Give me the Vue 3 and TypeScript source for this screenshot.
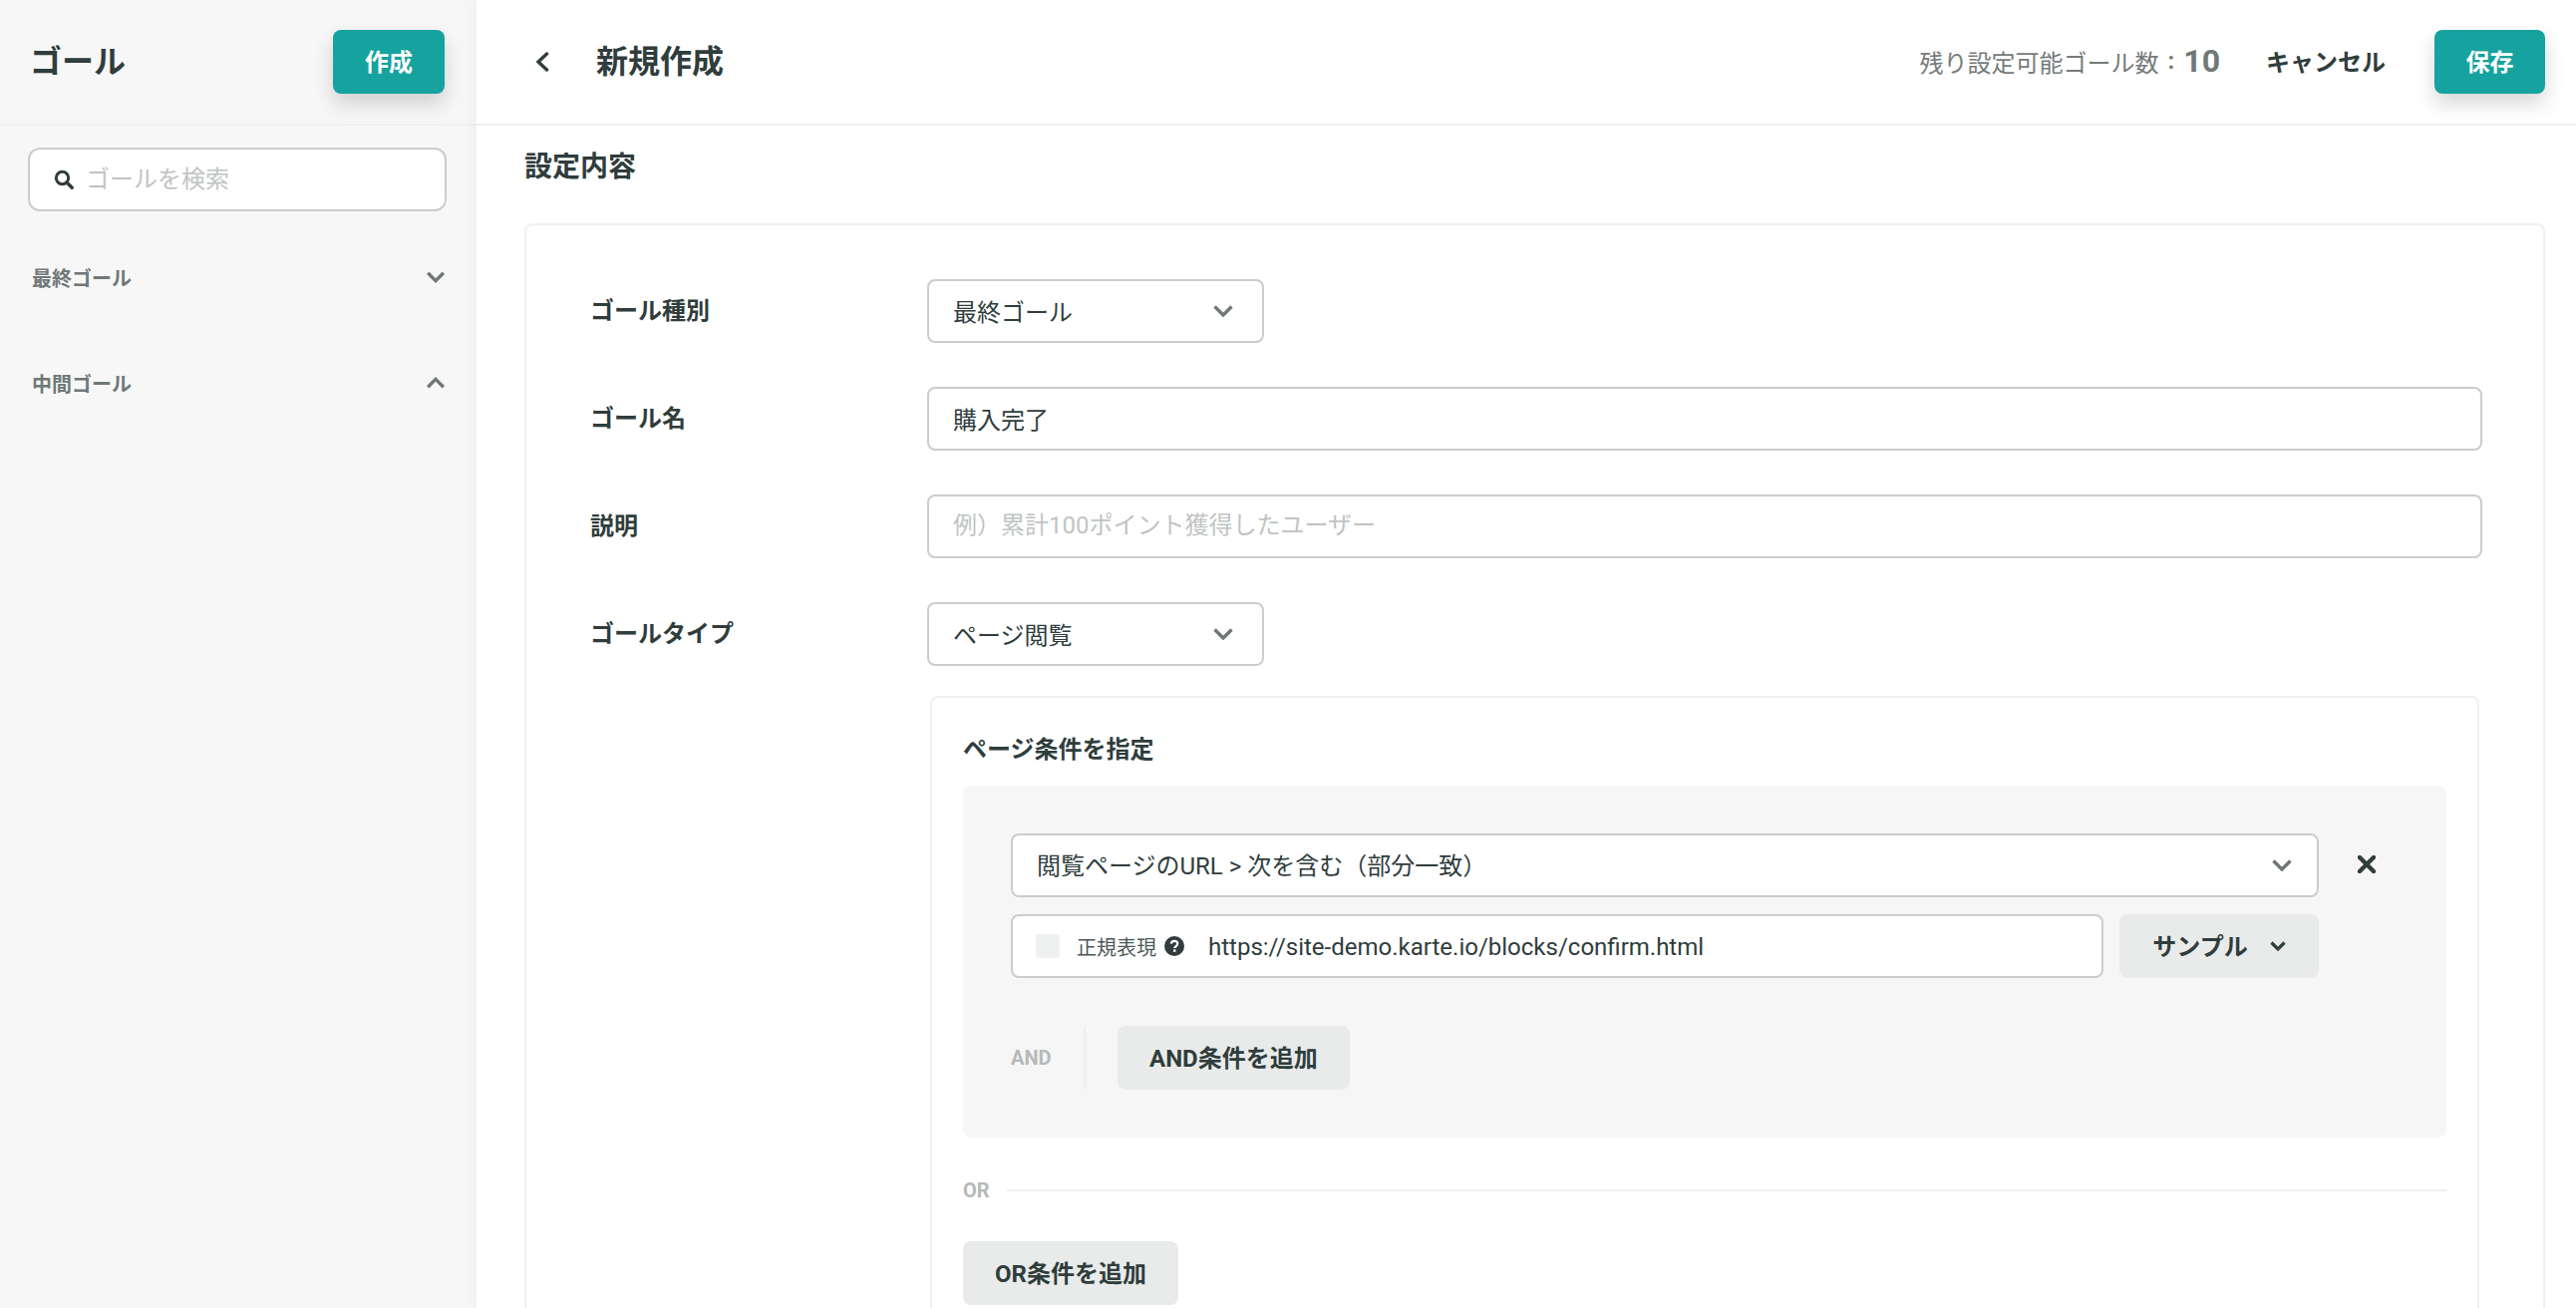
<script setup lang="ts">
import { ref } from 'vue'

const goalName = ref('購入完了')
const description = ref('')
const search = ref('')
const url = ref('https://site-demo.karte.io/blocks/confirm.html')

const sideGroups = [
  { label: '最終ゴール', open: false },
  { label: '中間ゴール', open: true },
]
</script>

<template>
  <div class="app">
    <aside class="side">
      <div class="side-head">
        <h1 class="side-title">ゴール</h1>
        <button class="btn-primary">作成</button>
      </div>
      <div class="side-search">
        <svg class="search-icon" viewBox="0 0 20 20" width="20" height="20">
          <circle cx="8.5" cy="8.5" r="6.2" fill="none" stroke="#2f3d3c" stroke-width="3" />
          <path d="M13 13l5.2 5.2" stroke="#2f3d3c" stroke-width="3.4" stroke-linecap="round" />
        </svg>
        <input v-model="search" class="search-input" placeholder="ゴールを検索" />
      </div>
      <div v-for="g in sideGroups" :key="g.label" class="side-group">
        <span>{{ g.label }}</span>
        <svg viewBox="0 0 18 12" width="18" height="12" :class="{ flip: g.open }">
          <path d="M1.2 1.8L9 9.6l7.8-7.8" fill="none" stroke="#6f7877" stroke-width="3.4" />
        </svg>
      </div>
    </aside>

    <main class="main">
      <header class="head">
        <svg class="back" viewBox="0 0 14 20" width="14" height="20">
          <path d="M11.5 2L3 10l8.5 8" fill="none" stroke="#2f3d3c" stroke-width="3.4" stroke-linecap="round" />
        </svg>
        <h2 class="head-title">新規作成</h2>
        <div class="remain">残り設定可能ゴール数<span class="colon">:</span><b>10</b></div>
        <button class="btn-text">キャンセル</button>
        <button class="btn-primary save">保存</button>
      </header>

      <div class="content">
        <h3 class="section-title">設定内容</h3>
        <section class="card">
          <div class="row">
            <label>ゴール種別</label>
            <div class="select short">
              <span>最終ゴール</span>
              <svg viewBox="0 0 20 12" width="20" height="12"><path d="M1.5 1.5L10 10l8.5-8.5" fill="none" stroke="#6f7877" stroke-width="3.4" /></svg>
            </div>
          </div>
          <div class="row">
            <label>ゴール名</label>
            <input v-model="goalName" class="field" />
          </div>
          <div class="row">
            <label>説明</label>
            <input v-model="description" class="field" placeholder="例）累計100ポイント獲得したユーザー" />
          </div>
          <div class="row">
            <label>ゴールタイプ</label>
            <div class="select short">
              <span>ページ閲覧</span>
              <svg viewBox="0 0 20 12" width="20" height="12"><path d="M1.5 1.5L10 10l8.5-8.5" fill="none" stroke="#6f7877" stroke-width="3.4" /></svg>
            </div>
          </div>

          <div class="cond-box">
            <h4 class="cond-title">ページ条件を指定</h4>
            <div class="cond-panel">
              <div class="cond-line">
                <div class="select wide">
                  <span>閲覧ページのURL &gt; 次を含む（部分一致）</span>
                  <svg viewBox="0 0 20 12" width="20" height="12"><path d="M1.5 1.5L10 10l8.5-8.5" fill="none" stroke="#6f7877" stroke-width="3.4" /></svg>
                </div>
                <svg class="close" viewBox="0 0 18 18" width="18" height="18">
                  <path d="M2 2l14 14M16 2L2 16" stroke="#2f3d3c" stroke-width="4.4" stroke-linecap="round" />
                </svg>
              </div>
              <div class="cond-value">
                <div class="url-box">
                  <span class="check"></span>
                  <span class="regex">正規表現</span>
                  <svg class="help" viewBox="0 0 20 20" width="20" height="20">
                    <circle cx="10" cy="10" r="10" fill="#2f3d3c" />
                    <path d="M6.8 7.6c.2-1.8 1.5-2.7 3.3-2.7 1.9 0 3.2 1.1 3.2 2.7 0 2.4-3.1 2.400-3.100 4.500" fill="none" stroke="#fff" stroke-width="2.2" />
                    <rect x="9" y="13.4" width="2.4" height="2.4" fill="#fff" />
                  </svg>
                  <input v-model="url" class="url-input" />
                </div>
                <button class="btn-gray sample">
                  <span>サンプル</span>
                  <svg viewBox="0 0 16 10" width="16" height="10"><path d="M1.5 1.5L8 8l6.5-6.5" fill="none" stroke="#2f3d3c" stroke-width="3.2" /></svg>
                </button>
              </div>
              <div class="and-line">
                <span class="and-label">AND</span>
                <button class="btn-gray">AND条件を追加</button>
              </div>
            </div>
            <div class="or-line"><span>OR</span></div>
            <button class="btn-gray or-btn">OR条件を追加</button>
          </div>
        </section>
      </div>
    </main>
  </div>
</template>

<style>
html, body { margin: 0; background: #fff; }
</style>

<style scoped>
.app {
  display: flex;
  height: 1312px;
  overflow: hidden;
  font-family: Roboto, "Noto Sans CJK JP", sans-serif;
  font-size: 24px;
  color: #2f3d3c;
}
button, input { font-family: inherit; font-size: 24px; color: inherit; }
h1, h2, h3, h4 { margin: 0; font-weight: 700; }

.side { width: 478px; flex: none; background: #f7f7f7; }
.side-head {
  height: 124px;
  border-bottom: 2px solid #f0f0f0;
  display: flex;
  align-items: center;
  justify-content: space-between;
  padding: 0 32px 0 30px;
}
.side-title { font-size: 32px; line-height: 48px; }
.btn-primary {
  width: 112px;
  height: 64px;
  border: 0;
  border-radius: 8px;
  padding: 0 0 3px;
  background: #16a29f;
  color: #fff;
  font-weight: 700;
  box-shadow: 0 10px 20px rgba(0, 0, 0, .16);
}
.btn-primary.save { width: 111px; }
.side-search {
  margin: 22px 30px 0 28px;
  height: 64px;
  box-sizing: border-box;
  border: 2px solid #ccc;
  border-radius: 12px;
  background: #fff;
  display: flex;
  align-items: center;
  padding-left: 24px;
  gap: 12px;
}
.search-input { flex: 1; min-width: 0; border: 0; outline: 0; padding: 0; background: none; }
.search-input::placeholder, .field::placeholder { color: #c0c4c3; opacity: 1; }
.side-group {
  display: flex;
  align-items: center;
  justify-content: space-between;
  height: 30px;
  margin: 0 32px;
  font-size: 20px;
  font-weight: 700;
  color: #6f7877;
}
.side-search + .side-group { margin-top: 51px; }
.side-group + .side-group { margin-top: 76px; }
.flip { transform: rotate(180deg); }

.main { flex: 1; min-width: 0; background: #fff; position: relative; box-shadow: 0 0 20px rgba(0, 0, 0, .05); }
.head {
  height: 124px;
  border-bottom: 2px solid #f0f0f0;
  display: flex;
  align-items: center;
  padding: 0 31px 0 59px;
}
.back { flex: none; }
.head-title { font-size: 32px; margin-left: 47px; line-height: 48px; }
.remain { margin-left: auto; color: #747b7a; display: flex; align-items: center; margin-top: -2px; }
.remain .colon { margin: 0 9px; font-weight: 700; }
.remain b { font-size: 32px; color: #6f7877; margin-right: -3px; }
.btn-text { background: none; border: 0; padding: 0 0 3px; margin: 0 49px; font-weight: 700; }

.content { padding: 0 31px 0 49px; }
.section-title { font-size: 28px; line-height: 40px; margin-top: 22px; margin-left: -1px; }
.card {
  margin-top: 36px;
  margin-left: -1px;
  border: 2px solid #f0f0f0;
  border-radius: 8px;
  padding: 54px 61px 40px 65px;
}
.row { display: flex; align-items: center; height: 64px; margin-bottom: 44px; }
.row label { width: 337px; flex: none; font-weight: 700; margin-top: -6px; margin-left: -1px; padding-right: 1px; }

.select, .field, .url-box {
  box-sizing: border-box;
  height: 64px;
  border: 2px solid #ccc;
  border-radius: 8px;
  background: #fff;
}
.select { display: flex; align-items: center; justify-content: space-between; padding: 0 27px 0 24px; }
.select.short { width: 338px; padding-right: 29px; }
.select.wide { width: 1312px; padding-right: 25px; }
.select span { margin-top: -1px; }
.select.wide span { margin-top: -3px; }
.field { flex: 1; min-width: 0; padding: 0 24px 2px; outline: 0; }

.cond-box {
  margin: -14px 3px 0 340px;
  border: 2px solid #f0f0f0;
  border-radius: 8px;
  padding: 34px 31px 40px;
}
.cond-title { font-size: 24px; line-height: 36px; margin-bottom: 18px; }
.cond-panel { background: #f6f6f6; border-radius: 8px; padding: 48px 49px 48px 48px; }
.cond-line { display: flex; align-items: center; gap: 39px; }
.close { margin-top: -3px; }
.cond-value { display: flex; gap: 16px; margin-top: 17px; width: 1312px; }
.url-box { flex: 1; min-width: 0; display: flex; align-items: center; padding-left: 23px; }
.check { width: 24px; height: 24px; border-radius: 3px; background: #eff1f1; flex: none; }
.regex { font-size: 20px; margin-left: 17px; color: #4c5857; }
.help { margin-left: 8px; flex: none; }
.url-input { flex: 1; min-width: 0; border: 0; outline: 0; padding: 2px 0 0; margin-left: 24px; background: none; }
.btn-gray {
  height: 64px;
  border: 0;
  border-radius: 8px;
  background: #e9ebeb;
  font-weight: 700;
  padding: 0 32px 3px;
}
.sample { width: 200px; flex: none; padding: 0; display: flex; align-items: center; justify-content: center; gap: 22px; }
.sample span { margin-top: -3px; }
.and-line { display: flex; align-items: center; margin-top: 48px; }
.and-label {
  width: 73px;
  height: 64px;
  line-height: 64px;
  border-right: 2px solid #eeeeee;
  font-size: 20px;
  font-weight: 700;
  color: #b5b9b8;
  margin-right: 32px;
}
.or-line {
  display: flex;
  align-items: center;
  gap: 17px;
  margin-top: 39px;
  height: 28px;
  font-size: 20px;
  font-weight: 700;
  color: #b5b9b8;
}
.or-line::after { content: ''; flex: 1; height: 2px; background: #f0f0f0; }
.or-btn { margin-top: 37px; display: block; width: 216px; padding: 0 0 3px; }
</style>
